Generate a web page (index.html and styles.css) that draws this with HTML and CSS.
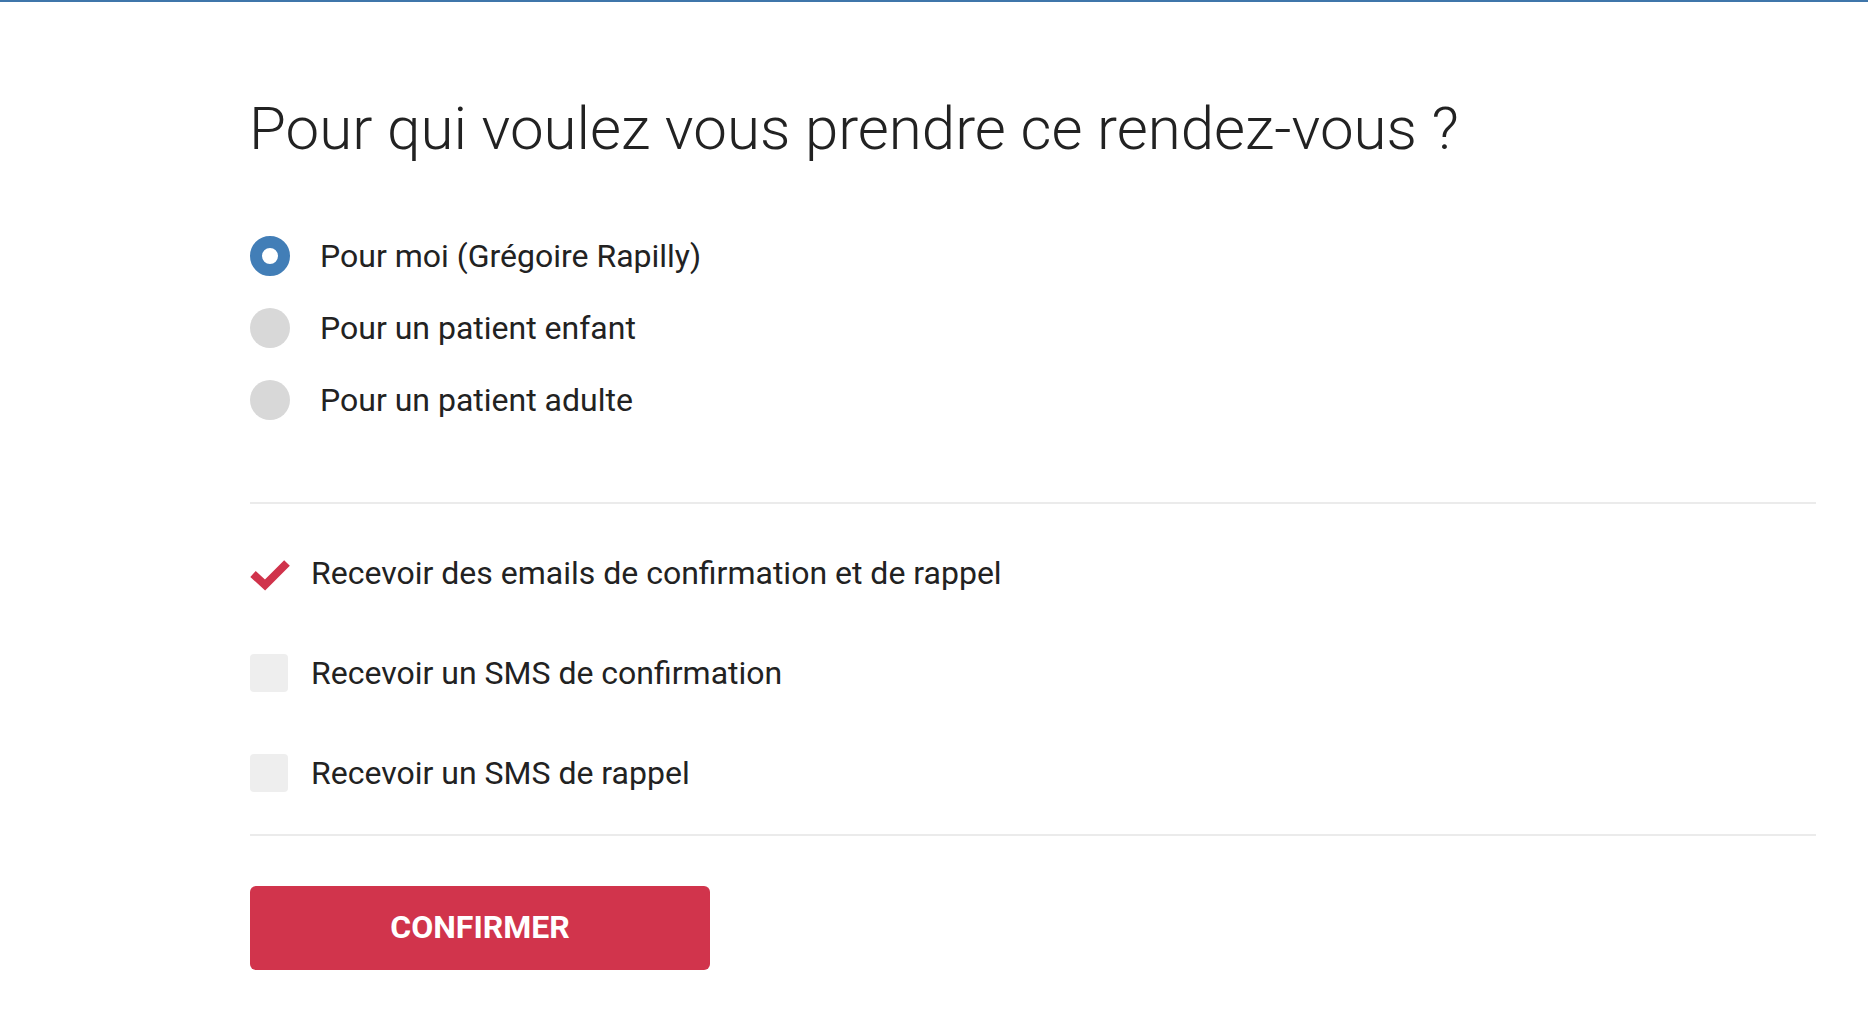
FILE: index.html
```html
<!DOCTYPE html>
<html lang="fr">
<head>
<meta charset="utf-8">
<title>Rendez-vous</title>
<link rel="stylesheet" href="styles.css">
</head>
<body>
<main class="page">
  <h1 class="title">Pour qui voulez vous prendre ce rendez-vous ?</h1>

  <div class="radios">
    <div class="radio-row">
      <span class="radio radio-on"></span>
      <span class="label">Pour moi (Grégoire Rapilly)</span>
    </div>
    <div class="radio-row">
      <span class="radio"></span>
      <span class="label">Pour un patient enfant</span>
    </div>
    <div class="radio-row">
      <span class="radio"></span>
      <span class="label">Pour un patient adulte</span>
    </div>
  </div>

  <hr class="sep sep-top">

  <div class="checks">
    <div class="check-row">
      <svg class="tick" viewBox="0 0 40 40" width="40" height="40" aria-hidden="true">
        <polyline points="3,21 15,32 37,10" fill="none" stroke="#d0334b" stroke-width="8" stroke-linejoin="miter" stroke-linecap="butt"/>
      </svg>
      <span class="label">Recevoir des emails de confirmation et de rappel</span>
    </div>
    <div class="check-row">
      <span class="box"></span>
      <span class="label">Recevoir un SMS de confirmation</span>
    </div>
    <div class="check-row">
      <span class="box"></span>
      <span class="label">Recevoir un SMS de rappel</span>
    </div>
  </div>

  <hr class="sep sep-bottom">

  <button class="confirm" type="button">CONFIRMER</button>
</main>
</body>
</html>
```

FILE: styles.css
```css
html, body {
  margin: 0;
  padding: 0;
  background: #ffffff;
}

body {
  border-top: 2px solid #3f76aa;
  font-family: Roboto, "Liberation Sans", sans-serif;
  color: #222222;
}

.page {
  padding: 0 52px 0 250px;
  display: flex;
  flex-direction: column;
  align-items: flex-start;
}

.title {
  margin: 91px 0 0 -1px;
  font-size: 60px;
  font-weight: 300;
  line-height: 72px;
  color: #222222;
  letter-spacing: 0;
}

.radios {
  margin-top: 55px;
  display: flex;
  flex-direction: column;
}

.radio-row {
  height: 72px;
  display: flex;
  align-items: center;
  gap: 30px;
}

.radio {
  width: 40px;
  height: 40px;
  border-radius: 50%;
  background: #d8d8d8;
  box-sizing: border-box;
  flex: none;
}

.radio-on {
  background: #ffffff;
  border: 12px solid #427eb7;
}

.label {
  font-size: 32px;
  font-weight: 400;
  line-height: 38px;
  color: #222222;
}

.sep {
  align-self: stretch;
  margin: 0;
  border: 0;
  height: 2px;
  background: #ebebeb;
}

.sep-top {
  margin-top: 66px;
}

.checks {
  margin-top: 19px;
  display: flex;
  flex-direction: column;
}

.check-row {
  height: 100px;
  display: flex;
  align-items: center;
  gap: 21px;
}

.tick {
  flex: none;
  display: block;
}

.box {
  width: 38px;
  height: 38px;
  margin-right: 2px;
  border-radius: 4px;
  background: #eeeeee;
  flex: none;
}

.sep-bottom {
  margin-top: 11px;
}

.confirm {
  margin-top: 50px;
  width: 460px;
  height: 84px;
  padding: 0 0 3px 0;
  border: 0;
  border-radius: 6px;
  background: #d1344c;
  color: #ffffff;
  font-family: Roboto, "Liberation Sans", sans-serif;
  font-size: 32px;
  font-weight: 700;
  letter-spacing: 0;
  cursor: pointer;
}
```
